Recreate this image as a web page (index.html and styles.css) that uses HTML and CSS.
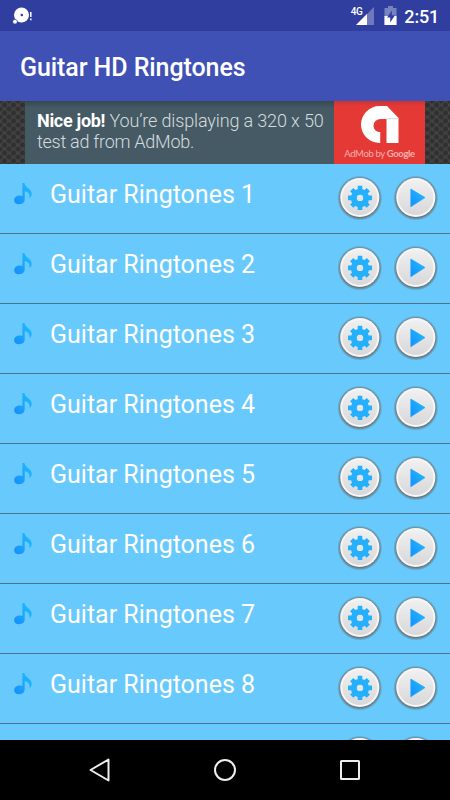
FILE: index.html
```
<!DOCTYPE html>
<html lang="en">
<head>
<meta charset="utf-8">
<title>Guitar HD Ringtones</title>
<link rel="stylesheet" href="styles.css">
</head>
<body>
<svg class="defs" width="0" height="0" aria-hidden="true">
  <defs>
    <linearGradient id="face" x1="0" y1="0" x2="0" y2="1"><stop offset="0" stop-color="#f0f0f0"/><stop offset="1" stop-color="#d8d8da"/></linearGradient>
    <linearGradient id="blue" x1="1" y1="0" x2="0" y2="1"><stop offset="0" stop-color="#20c0ff"/><stop offset="1" stop-color="#168cfc"/></linearGradient>
    <radialGradient id="shade"><stop offset=".86" stop-color="#666" stop-opacity=".85"/><stop offset="1" stop-color="#666" stop-opacity="0"/></radialGradient>
    <symbol id="disc" viewBox="0 0 46 46">
      <circle cx="22.800" cy="23.100" r="22.500" fill="url(#shade)"/>
      <circle cx="22.800" cy="22.500" r="19.600" fill="#f6f6f6"/>
      <circle cx="22.800" cy="22.500" r="17.600" fill="url(#face)"/>
    </symbol>
    <symbol id="gear" viewBox="0 0 46 46">
      <use href="#disc"/>
      <path d="M23 10.800v5M23 30v5M11 22.900h5M30 22.900h5M14.700 14.600l3.400 3.400M27.900 27.800l3.400 3.400M31.300 14.600l-3.400 3.400M18.100 27.800l-3.400 3.400" stroke="#24b0fd" stroke-width="4.600"/>
      <circle cx="23" cy="22.900" r="6.200" fill="none" stroke="#24b0fd" stroke-width="6"/>
    </symbol>
    <symbol id="play" viewBox="0 0 46 46">
      <use href="#disc"/>
      <path d="M17.800 14L32 22.600 17.800 31.800z" fill="url(#blue)" stroke="#22a6f7" stroke-width=".7" stroke-linejoin="round"/>
    </symbol>
    <symbol id="note" viewBox="0 0 20 24">
      <path d="M9.400 1h2c.5 4.200 7.300 6 7.300 10.500 0 1.900-.8 3.700-2.100 4.500.5-4-1.200-6-4.900-7v8.600c0 2.900-2.500 4.700-5.600 4.700-3 0-4.900-1.500-4.900-4.100 0-2.900 2.900-5 6.100-4.700.9 0 1.500.2 2.100.6z" fill="url(#blue)"/>
    </symbol>
  </defs>
</svg>
<div class="screen">
  <header class="status">
    <svg class="notice" width="22" height="20" viewBox="0 0 22 20">
      <circle cx="9.500" cy="9" r="7.500" fill="#fff"/><circle cx="9.800" cy="9" r="1.300" fill="#303f9f"/>
      <circle cx="3" cy="15.700" r="2.300" fill="#fff" stroke="#303f9f" stroke-width=".6"/>
      <path d="M18.800 6v5M18.800 12.500v1.800" stroke="#fff" stroke-width="1.500"/>
    </svg>
    <span class="network">4G</span>
    <svg class="signal" width="18" height="18" viewBox="0 0 18 18">
      <path d="M18 0v18H0z" fill="#6f79bc"/><path d="M11 7v11H0z" fill="#fff"/>
    </svg>
    <svg class="battery" width="14" height="19" viewBox="0 0 14 19">
      <path d="M4 0h5v2h3.500v17H.5V2H4z" fill="#7882c1"/><path d="M.5 10h12v9H.5z" fill="#fff"/>
      <path d="M8 4.500L3 11.500h3.200v5L11 9.200H7.800z" fill="#303f9f"/>
    </svg>
    <span class="clock">2:51</span>
  </header>
  <div class="appbar"><h1>Guitar HD Ringtones</h1></div>
  <div class="ad">
    <div class="banner">
      <p class="copy"><span class="line"><b>Nice job!</b> You’re displaying a 320 x 50</span><span class="line second">test ad from AdMob.</span></p>
      <div class="brand">
        <svg width="38" height="38" viewBox="0 0 38 38">
          <path d="M18.500 0H26l11.500 12V37H25.500V13H19.500a7 7 0 0 0-7 6.500c0 4 2.800 6.500 6.700 6.500V37H18.500a18.500 18.500 0 0 1 0-37z" fill="#fff"/>
          <path d="M25.500 12h12v1.300h-12z" fill="#dedede"/>
        </svg>
        <span class="by">AdMob by <b>Google</b></span>
      </div>
    </div>
  </div>
  <main class="list">
    <div class="row"><svg class="note"><use href="#note"/></svg><span class="name">Guitar Ringtones 1</span><svg class="btn"><use href="#gear"/></svg><svg class="btn"><use href="#play"/></svg></div>
    <div class="row"><svg class="note"><use href="#note"/></svg><span class="name">Guitar Ringtones 2</span><svg class="btn"><use href="#gear"/></svg><svg class="btn"><use href="#play"/></svg></div>
    <div class="row"><svg class="note"><use href="#note"/></svg><span class="name">Guitar Ringtones 3</span><svg class="btn"><use href="#gear"/></svg><svg class="btn"><use href="#play"/></svg></div>
    <div class="row"><svg class="note"><use href="#note"/></svg><span class="name">Guitar Ringtones 4</span><svg class="btn"><use href="#gear"/></svg><svg class="btn"><use href="#play"/></svg></div>
    <div class="row"><svg class="note"><use href="#note"/></svg><span class="name">Guitar Ringtones 5</span><svg class="btn"><use href="#gear"/></svg><svg class="btn"><use href="#play"/></svg></div>
    <div class="row"><svg class="note"><use href="#note"/></svg><span class="name">Guitar Ringtones 6</span><svg class="btn"><use href="#gear"/></svg><svg class="btn"><use href="#play"/></svg></div>
    <div class="row"><svg class="note"><use href="#note"/></svg><span class="name">Guitar Ringtones 7</span><svg class="btn"><use href="#gear"/></svg><svg class="btn"><use href="#play"/></svg></div>
    <div class="row"><svg class="note"><use href="#note"/></svg><span class="name">Guitar Ringtones 8</span><svg class="btn"><use href="#gear"/></svg><svg class="btn"><use href="#play"/></svg></div>
    <div class="row partial"><svg class="btn"><use href="#gear"/></svg><svg class="btn"><use href="#play"/></svg></div>
  </main>
  <nav class="nav">
    <svg viewBox="0 0 24 24"><path d="M20.500 1.500v21L2.500 12z"/></svg>
    <svg viewBox="0 0 24 24"><circle cx="12" cy="12" r="10"/></svg>
    <svg viewBox="0 0 24 24"><rect x="3" y="3" width="18" height="18" rx=".5"/></svg>
  </nav>
</div>
</body>
</html>
```
FILE: styles.css
```
* { box-sizing: border-box; }
body { margin: 0; font-family: Roboto, "Liberation Sans", sans-serif; }
svg { display: block; flex: none; }
.defs { position: absolute; }
.screen { width: 450px; height: 800px; display: flex; flex-direction: column; overflow: hidden; }

.status { height: 31px; flex: none; background: #303f9f; color: #fff; display: flex; align-items: flex-start; padding: 6px 11px 0 12px; }
.notice { margin-right: auto; }
.network { font-size: 10px; line-height: 10px; font-weight: 500; letter-spacing: -0.5px; margin-right: -6px; margin-top: 1px; }
.signal { margin-top: 1px; margin-right: 10px; }
.battery { margin-right: 6px; }
.clock { font-size: 18px; line-height: 21px; font-weight: 500; letter-spacing: -0.2px; }

.appbar { height: 70px; flex: none; background: #3f51b5; color: #fff; display: flex; align-items: center; padding: 3px 20px 0; }
h1 { margin: 0; font-size: 25px; font-weight: 500; line-height: 30px; letter-spacing: -0.08px; white-space: nowrap; }

.ad { height: 63px; flex: none; padding-left: 25px; background-color: #424242; background-image: radial-gradient(circle, #303030 32%, transparent 48%), radial-gradient(circle, #303030 32%, transparent 48%); background-size: 9px 8px; background-position: 0 0, 4.500px 4px; }
.banner { width: 400px; height: 63px; display: flex; background: linear-gradient(#37474f, #455a64 7px); color: #d5dcdf; }
.copy { margin: 0; width: 309px; padding: 9px 0 0 12px; font-size: 18px; line-height: 21px; font-weight: 300; letter-spacing: -0.14px; white-space: nowrap; }
.copy b { font-weight: 700; color: #fff; letter-spacing: -0.3px; }
.line { display: block; }
.second { letter-spacing: -0.26px; }
.brand { width: 91px; background: linear-gradient(#c93434, #e53935 5px); display: flex; flex-direction: column; align-items: center; padding-top: 5px; }
.by { font-family: Lato, sans-serif; font-size: 9.500px; line-height: 12px; letter-spacing: -0.35px; color: #f6b0ae; margin-top: 4px; white-space: nowrap; }
.by b { font-weight: 700; }

.list { height: 576px; flex: none; background: #67c9fc; overflow: hidden; }
.row { height: 70px; display: flex; align-items: flex-start; padding: 11px 11px 0 13px; border-bottom: 1px solid #4c7388; color: #fff; }
.note { width: 20px; height: 24px; margin-top: 7px; }
.name { font-size: 25px; line-height: 30px; margin: 5px auto 0 17px; white-space: nowrap; }
.btn { width: 46px; height: 46px; margin-left: 10px; }
.partial { justify-content: flex-end; border: 0; }

.nav { height: 60px; flex: none; background: #000; display: flex; align-items: center; justify-content: space-between; padding: 0 88px; }
.nav svg { width: 24px; height: 24px; fill: none; stroke: #eee; stroke-width: 2; stroke-linejoin: round; }
```
